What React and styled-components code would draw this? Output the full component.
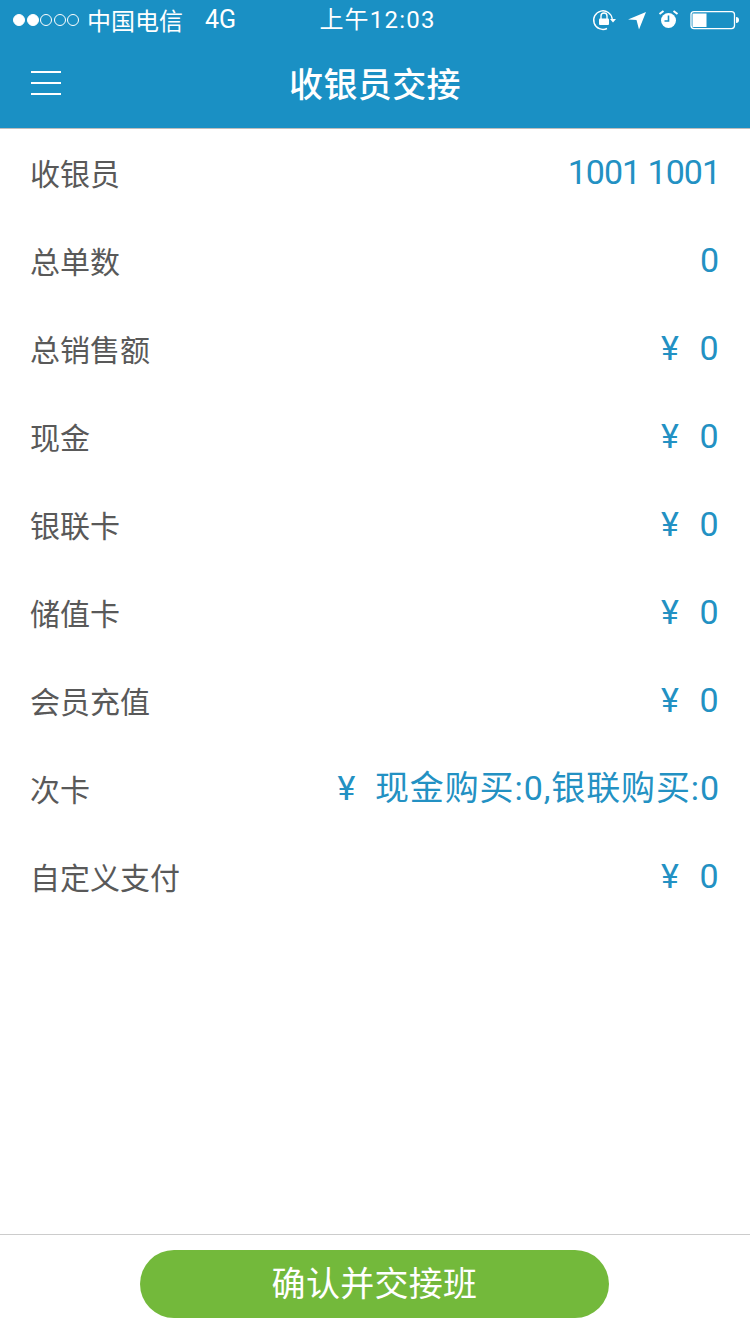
import React from "react";
import styled, { createGlobalStyle } from "styled-components";

const Global = createGlobalStyle`
  html, body { margin: 0; padding: 0; background: #fff; }
  * { box-sizing: border-box; }
`;
const cjk = `"Noto Sans CJK SC", "Noto Sans", sans-serif`;
const latin = `"Roboto", "Noto Sans CJK SC", sans-serif`;

const Page = styled.div`
  width: 750px; height: 1334px; display: flex; flex-direction: column; font-family: ${cjk}; overflow: hidden;
`;
const Header = styled.header`
  height: 129px; background: #1a90c4; color: #fff; flex: none; border-bottom: 1px solid #bdbdbd;
  display: flex; flex-direction: column;
`;
const StatusBar = styled.div`
  height: 40px; display: grid; grid-template-columns: 1fr auto 1fr; align-items: center; padding: 0 13px; flex: none;
`;
const StatusLeft = styled.div`
  display: flex; align-items: center; font-size: 24px; line-height: 40px;
`;
const Dots = styled.div`
  display: flex; gap: 1.5px; margin-right: 8px;
`;
const Dot = styled.span`
  width: 12px; height: 12px; border-radius: 50%; border: 1.3px solid #fff; background: ${p => (p.$on ? "#fff" : "transparent")};
`;
const Network = styled.span`
  font-family: ${latin}; font-size: 25px; font-weight: 400; margin-left: 22px;
`;
const Clock = styled.div`
  font-size: 24px; line-height: 40px; font-family: ${latin}; letter-spacing: 1.2px; margin-left: 5px;
`;
const StatusRight = styled.div`
  display: flex; align-items: center; justify-content: flex-end; margin-right: -3px;
`;
const NavBar = styled.div`
  flex: 1; display: flex; align-items: center; justify-content: center; position: relative; padding-bottom: 2px;
`;
const Title = styled.h1`
  margin: 0; font-size: 34px; font-weight: 500; line-height: 44px; letter-spacing: 0.4px;
`;
const Menu = styled.div`
  position: absolute; left: 31px; top: 31px; width: 30px; display: flex; flex-direction: column; gap: 9px;
`;
const MenuLine = styled.span`
  height: 2px; background: #fff;
`;
const List = styled.main`
  flex: 1; padding-top: 1px;
`;
const Row = styled.div`
  height: 88px; display: flex; align-items: center; justify-content: space-between; padding: 0 30px;
`;
const Label = styled.span`
  font-size: 30px; color: #595959; line-height: 44px; padding-bottom: 4px;
`;
const Value = styled.span`
  font-size: 34px; color: #2391c3; line-height: 44px; margin-bottom: 5px; white-space: pre; font-family: ${latin}; font-weight: 400;
  letter-spacing: ${p => p.$spacing};
`;
const Footer = styled.footer`
  height: 100px; flex: none; border-top: 1px solid #ccc; display: flex; justify-content: center; padding: 15px 1px 0 0;
`;
const Confirm = styled.button`
  width: 469px; height: 68px; border: 0; border-radius: 34px; background: #73b93b; color: #fff;
  font-family: ${cjk}; font-size: 34px; line-height: 64px; padding: 0 0 4px; letter-spacing: 0.3px;
`;

const rows = [
  ["收银员", "1001 1001", "-1px"],
  ["总单数", "0", "1px"],
  ["总销售额", "¥  0", "1.3px"],
  ["现金", "¥  0", "1.3px"],
  ["银联卡", "¥  0", "1.3px"],
  ["储值卡", "¥  0", "1.3px"],
  ["会员充值", "¥  0", "1.3px"],
  ["次卡", "¥  现金购买:0,银联购买:0", "0.9px"],
  ["自定义支付", "¥  0", "1.3px"],
];

const StatusIcons = () => (
  <svg width="162" height="24" viewBox="0 0 162 24" fill="none">
    <path d="M29 20.5A9.3 9.3 0 1 1 34.2 11" stroke="#fff" strokeWidth="1.4" />
    <path d="M32 11h6l-3 3.5z" fill="#fff" />
    <rect x="21" y="10.5" width="10" height="6.5" rx="1" fill="#fff" />
    <path d="M23 11V8a3 3 0 0 1 6 0v3" stroke="#fff" strokeWidth="1.4" />
    <path d="M50 11.5L68 4l-7 17.5-2.5-9.5z" fill="#fff" />
    <circle cx="90.5" cy="12.5" r="7.5" fill="#fff" />
    <path d="M90.5 7.5v5.5h-4" stroke="#1a90c4" strokeWidth="1.6" />
    <path d="M81.5 6l4-3M99.5 6l-4-3" stroke="#fff" strokeWidth="2" />
    <rect x="113" y="3.6" width="43.5" height="17" rx="3" stroke="#fff" strokeWidth="1.3" />
    <rect x="114.5" y="5.5" width="14" height="13.5" fill="#fff" />
    <path d="M158 9c2 0 3 1 3 3s-1 3-3 3z" fill="#fff" />
  </svg>
);

export default function App() {
  return (
    <Page>
      <Global />
      <Header>
        <StatusBar>
          <StatusLeft>
            <Dots>
              {[1, 1, 0, 0, 0].map((on, i) => (
                <Dot key={i} $on={!!on} />
              ))}
            </Dots>
            中国电信
            <Network>4G</Network>
          </StatusLeft>
          <Clock>上午12:03</Clock>
          <StatusRight>
            <StatusIcons />
          </StatusRight>
        </StatusBar>
        <NavBar>
          <Menu>
            <MenuLine />
            <MenuLine />
            <MenuLine />
          </Menu>
          <Title>收银员交接</Title>
        </NavBar>
      </Header>
      <List>
        {rows.map(([label, value, spacing]) => (
          <Row key={label}>
            <Label>{label}</Label>
            <Value $spacing={spacing}>{value}</Value>
          </Row>
        ))}
      </List>
      <Footer>
        <Confirm>确认并交接班</Confirm>
      </Footer>
    </Page>
  );
}
